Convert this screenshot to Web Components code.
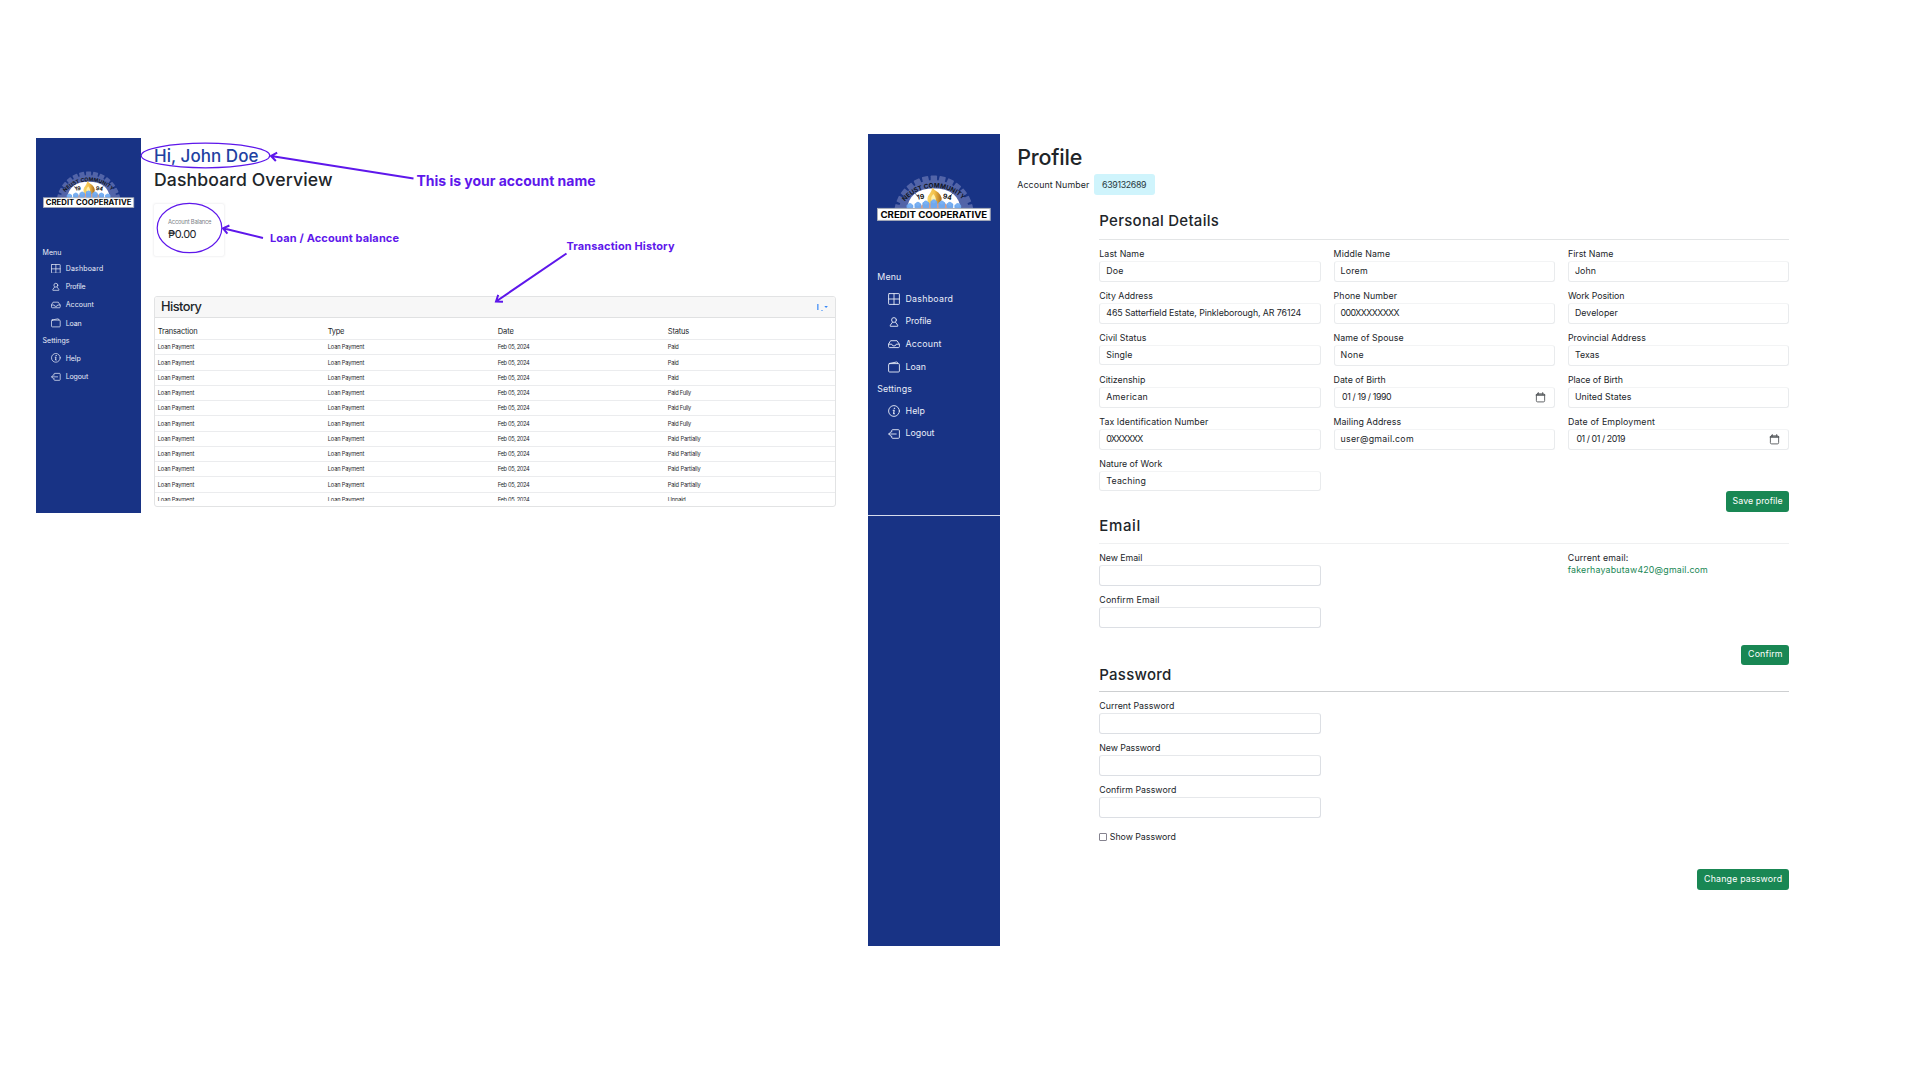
<!DOCTYPE html>
<html lang="en">
<head>
<meta charset="utf-8">
<title>Credit Cooperative</title>
<style>
html,body{margin:0;width:1920px;height:1080px;overflow:hidden;background:#fff}
body{font-family:Inter,"Open Sans","Liberation Sans",sans-serif;color:#212529}
</style>
</head>
<body>
<coop-board></coop-board>
<script>
const define = (name, render, after) => customElements.define(name, class extends HTMLElement {
  connectedCallback() {
    if (this.shadowRoot) return;
    this.attachShadow({ mode: 'open' }).innerHTML = render(k => this.getAttribute(k) || '', this);
    if (after) after(this);
  }
});

/* Text run spaced out to a given width */
define('fit-text', a => `<style>:host{display:block;line-height:1;font-size:${a('s') || 9}px;white-space:pre;flex:none}span{display:inline-block;vertical-align:top;margin-right:-20px}</style><span><slot></slot></span>`, el => {
  const w = +el.getAttribute('w'), span = el.shadowRoot.querySelector('span');
  if (!w) return;
  const n = el.textContent.length, now = span.getBoundingClientRect().width;
  if (now) span.style.letterSpacing = ((w - now) / (n - 1)) + 'px';
  el.style.width = w + 'px';
});

const ICONS = {
  dashboard: '<rect x=".6" y=".6" width="10.8" height="10.8" rx=".6"/><path d="M6 .6v10.8M.6 6h10.8"/>',
  profile: '<circle cx="6" cy="4" r="2.4"/><path d="M4.4 6.4 2.3 9.2v1.1h7.4V9.2L7.6 6.4"/>',
  account: '<path d="M3 2.7h6l2.4 3.7v2.2q0 1-1 1H1.6q-1 0-1-1V6.4z"/><path d="M.7 6.2h3.1q.3 1.8 2.2 1.8t2.2-1.8h3.1"/>',
  loan: '<rect x=".6" y="2.6" width="10.8" height="8.4" rx="1"/><path d="M1.2 2.5 8.6 1q1.2-.1 1.2 1.4"/>',
  help: '<circle cx="6" cy="6" r="5.4"/><path d="M5.2 5.2h1l-.6 3.5h.9" stroke-width="1.1"/><circle cx="6.3" cy="3.3" r=".35" stroke-width=".7"/>',
  logout: '<path d="M3.7 3.9V2.7q0-1 1-1h5.7q1 0 1 1v6.6q0 1-1 1H4.7q-1 0-1-1V8.1M8.2 6H.8M3 3.8.7 6 3 8.2"/>',
  calendar: '<rect x="1.5" y="2" width="9" height="8.800" rx="1.3"/><path d="M1.5 3.2h9" stroke-width="1.6"/><path d="M3.6.6v2M8.4.6v2"/>'
};
define('ui-icon', a => `<style>:host{display:block;width:${a('size') || 12}px;height:${a('size') || 12}px;flex:none}svg{display:block;width:100%;height:100%}</style><svg viewBox="0 0 12 12" fill="none" stroke="currentColor" stroke-width="${a('stroke') || .9}" stroke-linejoin="round" stroke-linecap="round">${ICONS[a('name')]}</svg>`);

/* Half gear emblem with the name banner */
define('coop-logo', () => {
  let teeth = '';
  for (let i = 0; i <= 12; i++) teeth += `<rect x="-3.2" y="-40" width="6.4" height="7" rx=".8" transform="translate(57 40.5) rotate(${-78 + i * 13})"/>`;
  const beads = [33, 41, 49, 57, 65, 73, 81].map(x => {
    const y = 30.5 - (24 - Math.abs(57 - x)) * .16;
    return `<rect x="${x - 3.4}" y="${y - 1.2}" width="6.8" height="${35 - y}" rx="1.6" fill="#6fa8ee"/><circle cx="${x}" cy="${y - .3}" r="2.1" fill="#79b0f2"/>`;
  }).join('');
  return `<style>:host{display:block;width:100%}svg{display:block;width:100%;overflow:visible;font-family:Inter,sans-serif;font-weight:700}</style>
<svg viewBox="0 0 114 46">
<defs><path id="arc" d="M28 26.500A39 39 0 0 1 87.500 26.500"/><linearGradient id="f" x2="1"><stop stop-color="#f7d76c"/><stop offset=".5" stop-color="#f3bf49"/><stop offset="1" stop-color="#a86a1b"/></linearGradient></defs>
<g fill="#5264a8">${teeth}<path d="M21.500 35A36 36 0 0 1 92.500 35Z"/></g>
<path d="M30 35Q32 13.500 57 13.500T84 35Z" fill="#fff"/>
<path d="M38 18l3.500 4.500M76 18l-3.500 4.500" stroke="#26345f" stroke-width=".7"/>
<path d="M42 33Q46 27 57 26T72 33Z" fill="#f19a70"/>
<path d="M51.500 28Q49 23 53 18.500Q54.500 17 55.500 12.500Q58 16 61.500 17.500Q67 23 63.500 28Q57 30 51.500 28Z" fill="url(#f)"/>
<path d="M56 27Q52 24 56.500 19Q60 23 58.500 27Z" fill="#fff0aa"/>
${beads}
<text font-size="6.4" fill="#101522"><textPath href="#arc" startOffset="0" textLength="65" lengthAdjust="spacingAndGlyphs">NEUST COMMUNITY</textPath></text>
<text x="43.700" y="24.300" font-size="6.8" text-anchor="middle" transform="rotate(-8 43.7 22)" fill="#111">19</text>
<text x="70.500" y="24.300" font-size="6.8" text-anchor="middle" transform="rotate(12 70.5 22)" fill="#111">94</text>
<rect x=".5" y="33.500" width="113" height="12" fill="#fff" stroke="#a9adb8"/>
<text x="3.500" y="42.700" font-size="8.700" textLength="107" lengthAdjust="spacingAndGlyphs" fill="#050505">CREDIT COOPERATIVE</text>
</svg>`;
});

define('nav-item', a => `<style>:host{display:flex;align-items:center;height:var(--h);padding-left:var(--ind)}ui-icon{margin-right:var(--ig)}</style><ui-icon name="${a('icon')}" size="${a('size')}"></ui-icon><fit-text w="${a('w')}" s="${a('s')}">${a('label')}</fit-text>`);

define('side-bar', a => {
  const L = a('variant') === 'small';
  const names = ['Dashboard', 'Profile', 'Account', 'Loan', 'Help', 'Logout'];
  const w = L ? [37.5, 20, 28, 16, 15, 22.5] : [47.5, 26, 36, 20.5, 19.5, 29];
  const it = i => `<nav-item icon="${names[i].toLowerCase()}" label="${names[i]}" w="${w[i]}" s="${L ? 7 : 8.8}" size="${L ? 9.7 : 12}"></nav-item>`;
  const v = L ? { p: '33px 7px 0 6.5px', m: '36.8px', mh: 15, h: 18.15, ind: 8.5, ig: 5, s: 7, a: 19, b: 27, sh: 17 }
              : { p: '41px 9px 0 9.3px', m: '47px', mh: 20, h: 22.6, ind: 10.7, ig: 5.5, s: 8.8, a: 24, b: 34.5, sh: 21.5 };
  return `<style>:host{display:block;box-sizing:border-box;flex:none;width:${L ? 104.7 : 132}px;height:${L ? 375 : 812}px;background:#183385;color:#e9edf8;padding:${v.p};--h:${v.h}px;--ind:${v.ind}px;--ig:${v.ig}px}
.t{display:flex;align-items:center;height:${v.mh}px}.g{margin-top:${v.m}}.t2{height:${v.sh}px}.cut{height:1px;background:#d6dcec;margin:70.500px -9px 0 -9.300px}</style>
<coop-logo></coop-logo><div class="t g"><fit-text w="${v.a}" s="${v.s}">Menu</fit-text></div><nav>${it(0)}${it(1)}${it(2)}${it(3)}</nav><div class="t t2"><fit-text w="${v.b}" s="${v.s}">Settings</fit-text></div><nav>${it(4)}${it(5)}</nav>${L ? '' : '<div class="cut"></div>'}`;
});

define('history-table', () => {
  const row = s => `<div class="r"><fit-text w="36.5" s="5.7">Loan Payment</fit-text><fit-text w="36.5" s="5.7">Loan Payment</fit-text><fit-text w="32" s="5.7">Feb 05, 2024</fit-text><fit-text w="${{ Paid: 11, 'Paid Fully': 23.5, 'Paid Partially': 33, Unpaid: 18 }[s]}" s="5.7">${s}</fit-text></div>`;
  const st = ['Paid', 'Paid', 'Paid', 'Paid Fully', 'Paid Fully', 'Paid Fully', 'Paid Partially', 'Paid Partially', 'Paid Partially', 'Paid Partially', 'Unpaid'];
  return `<style>:host{display:block;box-sizing:border-box;height:211px;border:1px solid #e2e3e4;border-radius:3px;overflow:hidden}
header{display:flex;justify-content:space-between;align-items:center;height:21px;background:#f7f7f7;border-bottom:1px solid #e0e1e2;padding:0 7px 0 6px;font-weight:500;box-sizing:border-box}
.b{height:183px;overflow:hidden}.r,.h{display:grid;grid-template-columns:repeat(4,170px);align-items:center;padding-left:2.800px;border-bottom:1px solid #ebecee;box-sizing:border-box;height:15.250px}.r{color:#24282c}
.h{height:22px;padding-top:6px}svg{width:12px;height:9px}</style>
<header><fit-text w="41" s="12.8">History</fit-text><svg viewBox="0 0 12 9" fill="#3788f7"><path d="M1 1h1.600v6H1z" opacity=".75"/><path d="M5 7h2v1H5z" opacity=".55"/><path d="M8.300 3h3.600L10.100 5z"/></svg></header>
<div class="b"><div class="h"><fit-text w="40" s="7.5">Transaction</fit-text><fit-text w="16.5" s="7.5">Type</fit-text><fit-text w="16" s="7.5">Date</fit-text><fit-text w="21.5" s="7.5">Status</fit-text></div>${st.map(row).join('')}</div>`;
});

define('dash-view', () => `<style>:host{display:flex;width:800px;margin-top:138px;height:376px;flex:none}main{flex:1;padding:8px 0 0 13.300px;min-width:0}
.a,.o{display:flex;align-items:center;font-weight:500}.a{height:20.500px;color:#2141a2}.o{height:27px}
.c{width:72px;height:54px;margin:9px 0 39.500px -.5px;box-sizing:border-box;border-radius:3px;border:1px solid #f5f5f6;box-shadow:0 0 2px #f1f1f3;padding:15px 0 0 13.500px}.c fit-text:first-child{color:#7b8085;margin-bottom:4.500px}</style>
<side-bar variant="small"></side-bar><main><div class="a"><fit-text w="104.500" s="17">Hi, John Doe</fit-text></div><div class="o"><fit-text w="178.500" s="17.6">Dashboard Overview</fit-text></div>
<div class="c"><fit-text w="43.5" s="5.8">Account Balance</fit-text><fit-text w="28.500" s="11">₱0.00</fit-text></div><history-table></history-table></main>`);

define('form-field', a => `<style>:host{display:block;height:42px;flex:none;width:221px}.l{height:15px;display:flex;align-items:center}
.i{box-sizing:border-box;height:${a('short') ? 20 : 21}px;width:221.500px;border:1px solid ${a('strong') ? '#dcdfe4' : '#e9ebed'};border-top-color:${a('strong') ? '#e6e8eb' : '#f3f4f5'};border-radius:3px;display:flex;align-items:center;justify-content:space-between;padding:0 8px 0 ${a('date') ? 7.5 : 6}px;margin-top:-1px}ui-icon{color:#55595c}</style>
<div class="l"><fit-text w="${a('lw')}" s="8.8">${a('label')}</fit-text></div><div class="i">${a('value') ? `<fit-text w="${a('vw')}" s="8.8">${a('value')}</fit-text>` : ''}${a('date') ? '<ui-icon name="calendar" size="11" stroke="1"></ui-icon>' : ''}</div>`);

define('green-button', a => `<style>:host{display:flex;align-items:center;justify-content:center;height:20.500px;width:${a('width')}px;background:#198754;color:#fff;border-radius:3px;margin-left:auto}</style><fit-text w="${a('w')}" s="8.8">${a('label')}</fit-text>`);

define('section-head', a => `<style>:host{display:flex;align-items:center;height:36px;border-bottom:1px solid ${a('line')};font-weight:500;box-sizing:border-box}</style><fit-text w="${a('w')}" s="15">${a('label')}</fit-text>`);

define('profile-view', () => {
  const F = [['Last Name', 45, 'Doe', 17], ['Middle Name', 56.5, 'Lorem', 27], ['First Name', 45.5, 'John', 21],
    ['City Address', 53.5, '465 Satterfield Estate, Pinkleborough, AR 76124', 195], ['Phone Number', 63.5, '000XXXXXXXX', 59], ['Work Position', 56.5, 'Developer', 43],
    ['Civil Status', 47, 'Single', 26, 'short="1"'], ['Name of Spouse', 70, 'None', 23], ['Provincial Address', 78, 'Texas', 24.5],
    ['Citizenship', 46, 'American', 41.5], ['Date of Birth', 52, '01 / 19 / 1990', 49.5, 'date="1"'], ['Place of Birth', 55, 'United States', 56.5],
    ['Tax Identification Number', 109, '0XXXXXX', 37], ['Mailing Address', 67.5, 'user@gmail.com', 73], ['Date of Employment', 87, '01 / 01 / 2019', 49, 'date="1"'],
    ['Nature of Work', 63, 'Teaching', 39.5, 'short="1"']];
  const f = ([l, lw, v, vw, x]) => `<form-field label="${l}" lw="${lw}" value="${v || ''}" vw="${vw || ''}" ${x || ''}></form-field>`;
  const e = (l, w) => f([l, w, '', '', 'strong="1"']);
  return `<style>:host{display:flex;margin-top:134px;margin-left:32px;height:812px}main{width:790px;padding:12px 0 0 17.300px}
h1{margin:0;height:22px;display:flex;align-items:center;font-weight:500}.n{display:flex;align-items:center;height:21px;margin-top:6px}.n span{display:flex;align-items:center;height:21px;width:61px;justify-content:center;background:#cff4fc;border-radius:3px;margin-left:4.500px;color:#26383e}.n fit-text{margin-top:1px}h1 fit-text{margin-top:1px}
section{margin-left:82px;width:690px}.p{padding-top:8.500px}.p section-head{height:36.500px;padding-bottom:1px}.g{display:grid;grid-template-columns:repeat(3,221px);column-gap:13.300px;margin-top:7px}.p green-button{margin-top:-8px}
.e section-head{height:32.500px;padding-bottom:3px}.row{display:flex;justify-content:space-between;padding-top:7px}.cur{width:221.500px}.cur fit-text{margin:3px 0 3.500px}.cur .m{color:#198754}
.e green-button{margin-top:9.500px}.w section-head{height:27px;padding-bottom:8px}.chk{display:flex;align-items:center;gap:2.500px;height:10px;margin-top:7px}.chk i{box-sizing:border-box;width:8px;height:8px;border:1px solid #85838f;border-radius:1px}.w green-button{margin-top:27px}</style>
<side-bar></side-bar><main><h1><fit-text w="65" s="21.5">Profile</fit-text></h1><div class="n"><fit-text w="72" s="8.8">Account Number</fit-text><span><fit-text w="44.5" s="8.8">639132689</fit-text></span></div>
<section class="p"><section-head label="Personal Details" w="119.5" line="#e3e5e6"></section-head><div class="g">${F.map(f).join('')}</div><green-button label="Save profile" w="50" width="63.5"></green-button></section>
<section class="e"><section-head label="Email" w="41" line="#eff0f1"></section-head><div class="row"><div>${e('New Email', 43)}${e('Confirm Email', 60)}</div><div class="cur"><fit-text w="60.5" s="8.8">Current email:</fit-text><fit-text class="m" w="140" s="8.8">fakerhayabutaw420@gmail.com</fit-text></div></div><green-button label="Confirm" w="34.5" width="48"></green-button></section>
<section class="w"><section-head label="Password" w="72" line="#cdcfd1"></section-head><div class="row"><div>${e('Current Password', 75)}${e('New Password', 61)}${e('Confirm Password', 77)}</div></div><div class="chk"><i></i><fit-text w="66" s="8.8">Show Password</fit-text></div><green-button label="Change password" w="78" width="92.5"></green-button></section></main>`;
});

/* Callouts drawn over the dashboard */
define('call-outs', () => {
  const arrow = (x1, y1, x2, y2) => {
    const t = Math.atan2(y1 - y2, x1 - x2), p = d => `${x2 + 7 * Math.cos(t + d)} ${y2 + 7 * Math.sin(t + d)}`;
    return `<path d="M${x1} ${y1}L${x2} ${y2}M${p(.65)}L${x2} ${y2}L${p(-.65)}"/>`;
  };
  return `<style>:host{position:absolute;left:0;top:0;color:#5e17eb;font-weight:700}svg{display:block}fit-text{position:absolute}</style>
<svg width="850" height="520" fill="none" stroke="#5e17eb" stroke-width="2"><g stroke-width="1.2"><ellipse cx="205.500" cy="155.500" rx="64.300" ry="12.300"/><ellipse cx="189.500" cy="228" rx="32.300" ry="24.700"/></g>${arrow(413.5, 178.5, 271, 156)}${arrow(263, 238, 223, 228.3)}${arrow(566.5, 253.5, 496, 301.5)}</svg>
<fit-text style="left:416.500px;top:174px" w="179" s="14">This is your account name</fit-text><fit-text style="left:270px;top:232.500px" w="129" s="11">Loan / Account balance</fit-text><fit-text style="left:566.500px;top:240.500px" w="108" s="11">Transaction History</fit-text>`;
});

define('coop-board', () => `<style>:host{display:flex;align-items:flex-start;position:relative;width:1920px;height:1080px;box-sizing:border-box;padding-left:36px;background:#fff}</style><dash-view></dash-view><profile-view></profile-view><call-outs></call-outs>`);
</script>
</body>
</html>
